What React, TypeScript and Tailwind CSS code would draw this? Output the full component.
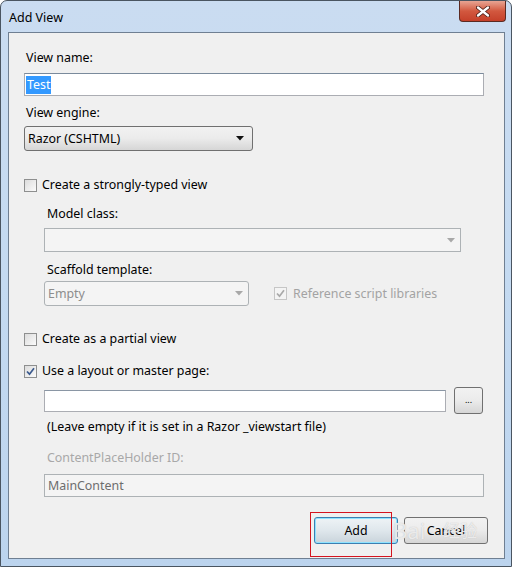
import React from "react";

const font = { fontFamily: '"Noto Sans", "Open Sans", Arial, sans-serif' };

function Check({ checked, disabled }: { checked?: boolean; disabled?: boolean }) {
  return (
    <span
      className={`w-[13px] h-[13px] shrink-0 border flex items-center justify-center ${
        disabled ? "border-[#c6c6c6] bg-[#f4f4f4]" : "border-[#8e8f8f] bg-gradient-to-br from-[#dcdcdc] to-[#fbfbfb]"
      }`}
    >
      {checked && (
        <svg width="9" height="9" viewBox="0 0 9 9">
          <path
            d="M1 4.5 L3.5 7.2 L8 1.2"
            fill="none"
            stroke={disabled ? "#a9a9a9" : "#3b5a8e"}
            strokeWidth="1.7"
          />
        </svg>
      )}
    </span>
  );
}

function Arrow({ disabled }: { disabled?: boolean }) {
  return (
    <svg width="8" height="5" viewBox="0 0 8 5">
      <path d="M0 0 H8 L4 4.5 Z" fill={disabled ? "#a8a8a8" : "#111"} />
    </svg>
  );
}

export default function App() {
  return (
    <div className="relative w-[512px] h-[567px] overflow-hidden bg-white" style={font}>
      <div className="w-full h-full flex flex-col rounded-t-[7px] border border-[#4a5561] bg-gradient-to-b from-[#cadcf1] via-[#c4daf1] to-[#bcd4ee]">
        {/* ============ TITLE BAR ============ */}
        <div className="h-[31px] flex items-start shrink-0">
          <span className="text-[12.5px] text-black leading-[16px] pl-[8px] pt-[9px]">Add View</span>
          <div className="flex-1" />
          <div className="mr-[5px] w-[47px] h-[21px] rounded-b-[4px] border border-t-0 border-[#5b2a22] bg-gradient-to-b from-[#e7a493] via-[#d2583f] to-[#c5402a] flex items-center justify-center">
            <svg width="14" height="11" viewBox="0 0 14 11">
              <path d="M2 1.5 L12 9.5 M12 1.5 L2 9.5" stroke="#4a1d16" strokeWidth="4" strokeLinecap="round" />
              <path d="M2 1.5 L12 9.5 M12 1.5 L2 9.5" stroke="#ffffff" strokeWidth="2.3" strokeLinecap="round" />
            </svg>
          </div>
        </div>

        {/* ============ CLIENT AREA ============ */}
        <div className="flex-1 ml-[7px] mr-[6px] mb-[7px] border border-[#6f7f92] bg-[#f0f0f0] flex flex-col pl-[15px] text-[12.4px] text-black leading-[16px]">
          <div className="mt-[17px] pl-[2px]">View name:</div>
          <div className="mt-[7px] w-[460px] h-[23px] border border-[#abadb3] border-t-[#7a8a9c] bg-white flex items-center px-[1px]">
            <span className="bg-[#3399ff] text-white px-[1px] leading-[18px]">Test</span>
          </div>

          <div className="mt-[9px] pl-[2px]">View engine:</div>
          <div className="mt-[5px] w-[229px] h-[25px] rounded-[3px] border border-[#707070] bg-gradient-to-b from-[#f2f2f2] via-[#ebebeb] to-[#d6d6d6] flex items-center justify-between pl-[3px] pr-[8px]">
            <span>Razor (CSHTML)</span>
            <Arrow />
          </div>

          <div className="mt-[26px] flex items-center gap-[5px]">
            <Check />
            <span>Create a strongly-typed view</span>
          </div>

          <div className="ml-[20px] flex flex-col">
            <div className="mt-[13px] pl-[3px]">Model class:</div>
            <div className="mt-[6px] w-[417px] h-[24px] border border-[#adb2b5] bg-[#f4f4f4] flex items-center justify-end pr-[5px]">
              <Arrow disabled />
            </div>

            <div className="mt-[10px] pl-[3px]">Scaffold template:</div>
            <div className="mt-[3px] flex items-center h-[25px]">
              <div className="w-[205px] h-[25px] rounded-[3px] border border-[#adb2b5] bg-[#f4f4f4] flex items-center justify-between pl-[3px] pr-[5px] text-[#8d8d8d]">
                <span>Empty</span>
                <Arrow disabled />
              </div>
              <div className="ml-[25px] flex items-center gap-[6px] text-[#a3a3a3]">
                <Check checked disabled />
                <span>Reference script libraries</span>
              </div>
            </div>
          </div>

          <div className="mt-[25px] flex items-center gap-[5px]">
            <Check />
            <span>Create as a partial view</span>
          </div>

          <div className="mt-[16px] flex items-center gap-[5px]">
            <Check checked />
            <span>Use a layout or master page:</span>
          </div>

          <div className="ml-[20px] flex flex-col">
            <div className="mt-[8px] h-[27px] flex items-center gap-[8px]">
              <div className="w-[402px] h-[22px] border border-[#abadb3] border-t-[#8a96a4] bg-white" />
              <div className="w-[29px] h-[27px] rounded-[3px] border border-[#707070] bg-gradient-to-b from-[#f2f2f2] via-[#ebebeb] to-[#d6d6d6] flex items-center justify-center text-[9px] leading-none pb-[2px]">
                ...
              </div>
            </div>
            <div className="mt-[5px] pl-[3px]">(Leave empty if it is set in a Razor _viewstart file)</div>

            <div className="mt-[15px] pl-[3px] text-[#a8a8a8]">ContentPlaceHolder ID:</div>
            <div className="mt-[8px] w-[440px] h-[23px] border border-[#adb2b5] bg-[#f4f4f4] flex items-center pl-[3px] text-[#6d6d6d]">
              MainContent
            </div>
          </div>

          <div className="mt-[20px] flex justify-end gap-[6px] pr-[16px]">
            <div className="w-[84px] h-[27px] rounded-[3px] border border-[#3c7fb1] shadow-[inset_0_0_0_1px_#8fe3ff] bg-gradient-to-b from-[#eef3f6] via-[#dfe7ec] to-[#c9d4db] flex items-center justify-center">
              Add
            </div>
            <div className="w-[84px] h-[27px] rounded-[3px] border border-[#707070] bg-gradient-to-b from-[#f2f2f2] via-[#ebebeb] to-[#d6d6d6] flex items-center justify-center">
              Cancel
            </div>
          </div>
        </div>
      </div>

      {/* red highlight box drawn over the screenshot */}
      <div className="absolute left-[310px] top-[512px] w-[82px] h-[45px] border border-[#d4141f]" />

      {/* faint watermark */}
      <div className="absolute left-[393px] top-[518px] flex items-center gap-[2px] text-[22px] leading-[24px] text-white/70 [text-shadow:0_0_1px_#b8b8b8]">
        <span>Bai</span>
        <span className="w-[14px]" />
        <span className="text-[17px]" style={{ fontFamily: '"Noto Sans CJK SC", sans-serif' }}>经验</span>
      </div>
    </div>
  );
}
